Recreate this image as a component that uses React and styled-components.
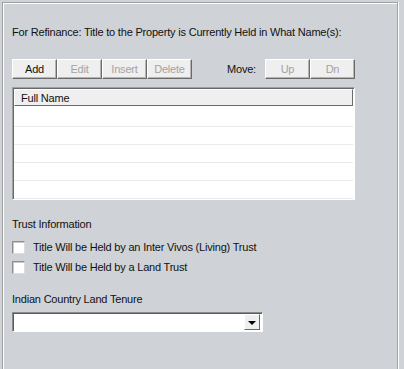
import React from "react";
import styled, { createGlobalStyle } from "styled-components";

const GlobalStyle = createGlobalStyle`
  html, body {
    margin: 0;
    padding: 0;
    background: #cfd3d7;
    overflow: hidden;
  }
  body {
    font-family: "Liberation Sans", Arial, sans-serif;
    font-size: 11px;
    letter-spacing: -0.2px;
    color: #111;
  }
`;

const Panel = styled.div`
  margin: 2px 0 0 2px;
  width: 396px;
  height: 380px;
  border: 1px solid #a0a0a0;
  border-bottom: none;
  box-shadow: inset 1px 1px 0 #fff, 1px 0 0 #fff;
  padding: 22px 0 0 9px;
  box-sizing: border-box;
  display: flex;
  flex-direction: column;
`;

const Label = styled.div`
  line-height: 14px;
  height: 14px;
  white-space: nowrap;
  margin-top: ${(p) => p.$top || 0}px;
`;

const Toolbar = styled.div`
  display: flex;
  align-items: center;
  margin-top: 20px;
  height: 20px;
`;

const Button = styled.div`
  width: 45px;
  height: 20px;
  box-sizing: border-box;
  background: #efefef;
  border: 1px solid;
  border-color: #fff #6a6a6a #6a6a6a #fff;
  box-shadow: inset -1px -1px 0 #b4b4b4;
  display: flex;
  align-items: center;
  justify-content: center;
  color: ${(p) => (p.$disabled ? "#a3a3a3" : "#111")};
`;

const MoveLabel = styled.div`
  margin: 0 9px 0 35px;
`;

const List = styled.div`
  margin-top: 8px;
  width: 343px;
  height: 113px;
  box-sizing: border-box;
  background: #fff;
  border: 1px solid;
  border-color: #a0a0a0 #fff #fff #a0a0a0;
  box-shadow: inset 1px 1px 0 #696969;
  padding: 1px 0 0 1px;
`;

const Header = styled.div`
  height: 17px;
  box-sizing: border-box;
  margin-right: 1px;
  background: #efefef;
  border: 1px solid;
  border-color: #fff #6a6a6a #6a6a6a #fff;
  padding-left: 6px;
  display: flex;
  align-items: center;
`;

const Rows = styled.div`
  padding-top: 3px;
`;

const Row = styled.div`
  height: 18px;
  box-sizing: border-box;
  border-bottom: 1px solid #ebebeb;
  margin-right: 1px;
`;

const CheckList = styled.div`
  margin-top: 6px;
`;

const CheckRow = styled.label`
  display: flex;
  align-items: center;
  height: 20px;
  gap: 8px;
`;

const Box = styled.span`
  width: 13px;
  height: 13px;
  box-sizing: border-box;
  background: #fff;
  border: 1px solid;
  border-color: #8e8e8e #dcdcdc #dcdcdc #8e8e8e;
  box-shadow: inset 1px 1px 0 #c8c8c8;
`;

const Select = styled.div`
  margin-top: 6px;
  width: 251px;
  height: 20px;
  box-sizing: border-box;
  background: #fff;
  border: 1px solid;
  border-color: #8a8a8a #fff #fff #8a8a8a;
  box-shadow: inset 1px 1px 0 #5a5a5a;
  display: flex;
  justify-content: flex-end;
  align-items: center;
  padding-right: 2px;
`;

const Arrow = styled.div`
  width: 16px;
  height: 16px;
  box-sizing: border-box;
  background: #efefef;
  border: 1px solid;
  border-color: #fff #6a6a6a #6a6a6a #fff;
  display: flex;
  align-items: center;
  justify-content: center;
  &::after {
    content: "";
    border-left: 4px solid transparent;
    border-right: 4px solid transparent;
    border-top: 4px solid #000;
    margin-top: 1px;
  }
`;

export default function App() {
  return (
    <>
      <GlobalStyle />
      <Panel>
        <Label>For Refinance: Title to the Property is Currently Held in What Name(s):</Label>
        <Toolbar>
          <Button>Add</Button>
          <Button $disabled>Edit</Button>
          <Button $disabled>Insert</Button>
          <Button $disabled>Delete</Button>
          <MoveLabel>Move:</MoveLabel>
          <Button $disabled>Up</Button>
          <Button $disabled>Dn</Button>
        </Toolbar>
        <List>
          <Header>Full Name</Header>
          <Rows>
            {[0, 1, 2, 3, 4].map((i) => (
              <Row key={i} />
            ))}
          </Rows>
        </List>
        <Label $top={17}>Trust Information</Label>
        <CheckList>
          <CheckRow>
            <Box />
            Title Will be Held by an Inter Vivos (Living) Trust
          </CheckRow>
          <CheckRow>
            <Box />
            Title Will be Held by a Land Trust
          </CheckRow>
        </CheckList>
        <Label $top={15}>Indian Country Land Tenure</Label>
        <Select>
          <Arrow />
        </Select>
      </Panel>
    </>
  );
}
